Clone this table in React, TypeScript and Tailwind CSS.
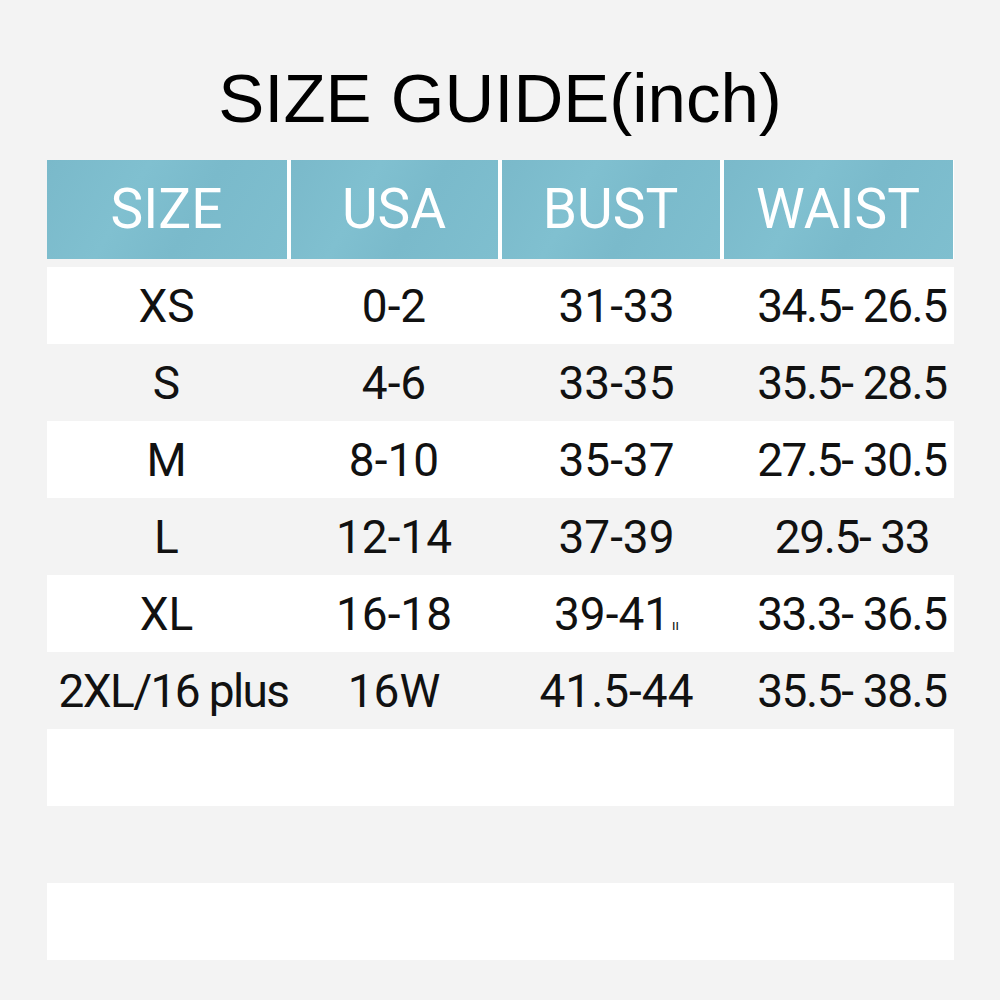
import React from "react";

const rows: { c: React.ReactNode[]; white: boolean }[] = [
  { c: ["XS", "0-2", "31-33", "34.5- 26.5"], white: true },
  { c: ["S", "4-6", "33-35", "35.5- 28.5"], white: false },
  { c: ["M", "8-10", "35-37", "27.5- 30.5"], white: true },
  { c: ["L", "12-14", "37-39", "29.5- 33"], white: false },
  {
    c: [
      "XL",
      "16-18",
      <span key="b">
        39-41<span className="text-[14px] ml-[2px]">ıı</span>
      </span>,
      "33.3- 36.5",
    ],
    white: true,
  },
  { c: [<span key="p" className="tracking-[-0.035em] ml-[14px]">2XL/16 plus</span>, "16W", "41.5-44", "35.5- 38.5"], white: false },
  { c: ["", "", "", ""], white: true },
  { c: ["", "", "", ""], white: false },
  { c: ["", "", "", ""], white: true },
];

const cols = "grid grid-cols-[240px_207px_218px_229px] gap-x-[4px]";
const cellPad = ["", "", "pl-[12px]", "pl-[28px] tracking-[-0.03em]"];

export default function App() {
  return (
    <div className="w-[1000px] h-[1000px] bg-[#f3f3f3] flex flex-col items-center pt-[64px]">
      <h1 className="h-[69px] leading-[69px] text-[69px] text-black font-['Liberation_Sans',Arial,sans-serif] font-normal whitespace-nowrap">
        SIZE GUIDE(inch)
      </h1>
      <div className="mt-[27px] w-[907px] font-['Roboto',sans-serif]">
        <div className={`${cols} h-[99px] bg-white`}>
          {["SIZE", "USA", "BUST", "WAIST"].map((h) => (
            <div
              key={h}
              className="flex items-center justify-center bg-[linear-gradient(120deg,#7ab9ca_0%,#80c0d0_35%,#7abacb_60%,#7fbfcf_100%)] text-white text-[55px] leading-none"
            >
              {h}
            </div>
          ))}
        </div>
        <div className="mt-[8px] flex flex-col">
          {rows.map((r, i) => (
            <div
              key={i}
              className={`${cols} h-[77px] ${r.white ? "bg-white" : "bg-[#f3f3f3]"}`}
            >
              {r.c.map((t, j) => (
                <div
                  key={j}
                  className={`flex items-center justify-center text-[46px] leading-none text-[#111] whitespace-nowrap ${cellPad[j]}`}
                >
                  {t}
                </div>
              ))}
            </div>
          ))}
        </div>
      </div>
    </div>
  );
}
